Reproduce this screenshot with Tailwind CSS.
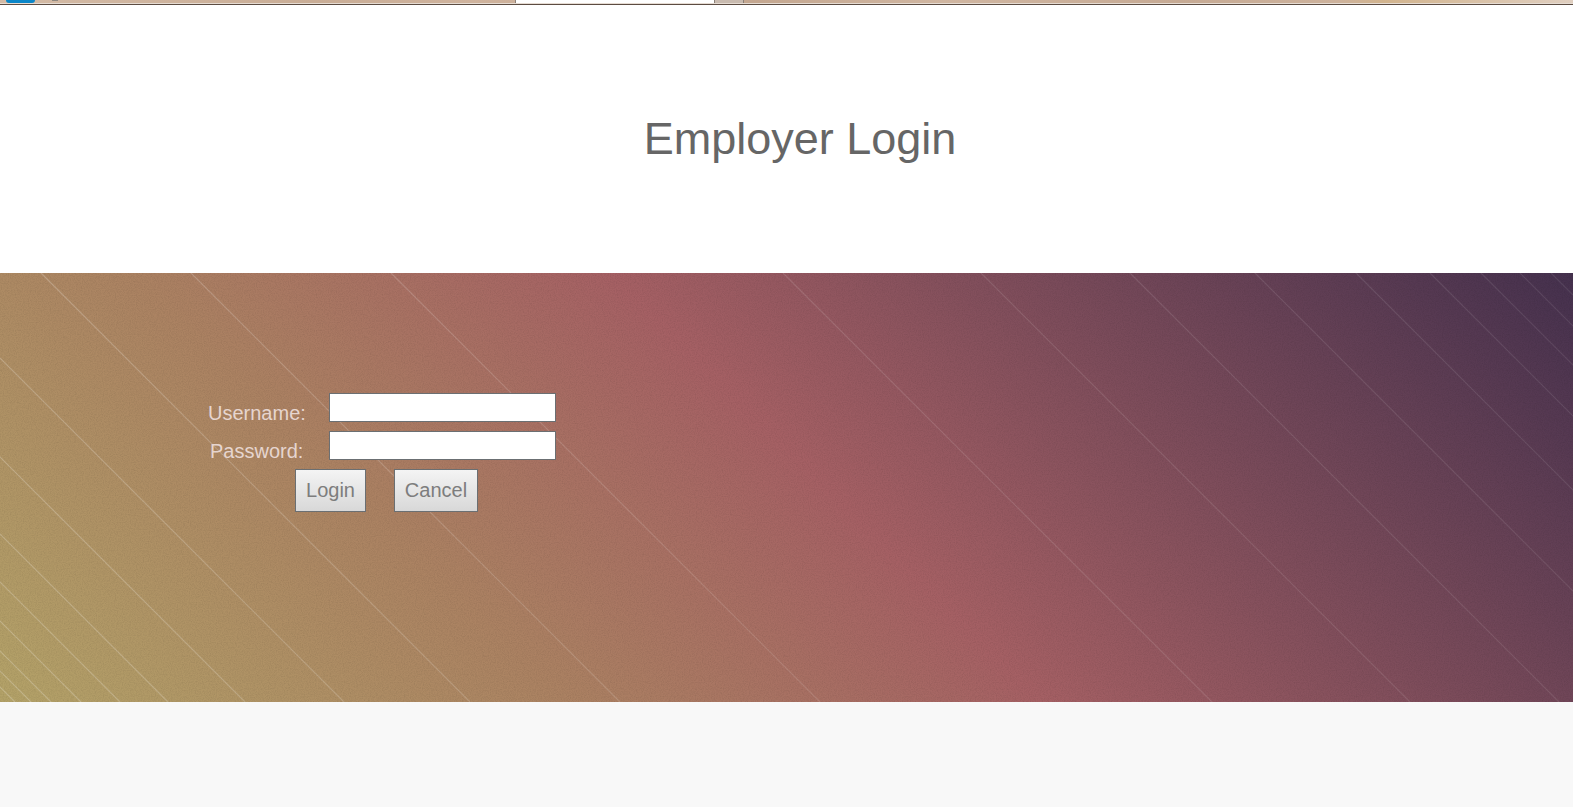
<!doctype html>
<html lang="en">
<head>
    <meta charset="utf-8"/>
    <title>Employer Login</title>
    <script src="https://cdn.jsdelivr.net/npm/@tailwindcss/browser@4"></script>
</head>
<body class="bg-[#f8f8f8] min-h-screen font-['Liberation_Sans',Arial,sans-serif] overflow-hidden">
    <!-- strip of the browser window behind -->
    <div class="h-[5px] border-b border-[#5c4c42] bg-[#e6dcd3]">
        <div class="h-[3px] flex bg-[linear-gradient(90deg,#d4bba6_0%,#c9ad96_20%,#cfb39d_30%,#c4a790_48%,#d0b6a1_60%,#c6aa94_75%,#cdb29c_85%,#d2b48e_88%,#e0cfc0_100%)]">
            <div class="w-[29px] ml-[6px] bg-[#0b86c8] rounded-b-md"></div>
            <div class="w-[6px] h-[1px] ml-[17px] bg-[#8f8880]"></div>
            <div class="w-[457px]"></div>
            <div class="w-[199px] bg-white border-l border-[#8a8078]"></div>
            <div class="w-[30px] bg-[#c9bbb0] border-x border-[#8a8078]"></div>
        </div>
    </div>

    <header class="h-[268px] bg-white flex items-center justify-center">
        <h1 class="text-[#666666] text-[45px] leading-none pl-[27px] pb-[2px]">Employer Login</h1>
    </header>

    <main class="relative h-[429px] overflow-hidden bg-[linear-gradient(45deg,#b3a268_0%,#ab8262_28%,#a56064_52%,#45314e_100%)]">
        <svg class="absolute inset-0 w-full h-full" viewBox="0 0 1573 429" aria-hidden="true">
            <defs>
                <linearGradient id="fade" gradientUnits="userSpaceOnUse" x1="0" y1="0" x2="1573" y2="0">
                    <stop offset="0" stop-color="#ffffff" stop-opacity="0.22"/>
                    <stop offset="0.5" stop-color="#ffffff" stop-opacity="0.12"/>
                    <stop offset="1" stop-color="#ffffff" stop-opacity="0.09"/>
                </linearGradient>
                <filter id="grain" x="0" y="0" width="100%" height="100%">
                    <feTurbulence type="fractalNoise" baseFrequency="0.85" numOctaves="2" seed="4"/>
                    <feColorMatrix values="0 0 0 0 0  0 0 0 0 0  0 0 0 0 0  0 0 0 1.6 -0.6"/>
                </filter>
            </defs>
            <rect width="1573" height="429" filter="url(#grain)" opacity="0.09"/>
            <path stroke="url(#fade)" stroke-width="1.2" fill="none" d="M-414 0L15 429M-398 0L31 429M-378 0L51 429M-348 0L81 429M-309 0L120 429M-261 0L168 429M-184 0L245 429M-85 0L344 429M41 0L470 429M191 0L620 429M391 0L820 429M783 0L1212 429M981 0L1410 429M1130 0L1559 429M1255 0L1684 429M1356 0L1785 429M1430 0L1859 429M1481 0L1910 429M1520 0L1949 429M1551 0L1980 429"/>
        </svg>
        <form class="relative ml-[199px] pt-[115px] flex flex-col">
            <div class="flex items-center h-[38px]">
                <label class="w-[130px] shrink-0 pl-[9px] pt-[12px] text-[#e6d5cf] text-[20px]">Username:</label>
                <input class="w-[227px] h-[29px] bg-white border border-[#6b6f72]" type="text"/>
            </div>
            <div class="flex items-center h-[38px]">
                <label class="w-[130px] shrink-0 pl-[11px] pt-[12px] text-[#e6d5cf] text-[20px]">Password:</label>
                <input class="w-[227px] h-[29px] bg-white border border-[#6b6f72]" type="password"/>
            </div>
            <div class="flex gap-[28px] ml-[96px] mt-[5px]">
                <button class="w-[71px] h-[43px] pb-[2px] text-[20px] text-[#7d7d7d] border border-[#6b6f72] bg-linear-to-b from-[#f4f4f4] to-[#d8d8d8]" type="button">Login</button>
                <button class="w-[84px] h-[43px] pb-[2px] text-[20px] text-[#7d7d7d] border border-[#6b6f72] bg-linear-to-b from-[#f4f4f4] to-[#d8d8d8]" type="button">Cancel</button>
            </div>
        </form>
    </main>
</body>
</html>
